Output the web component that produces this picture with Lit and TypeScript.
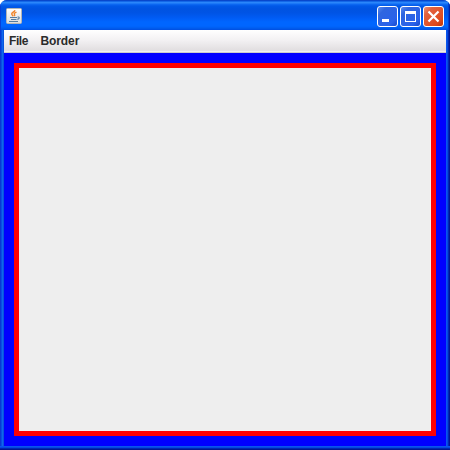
import { LitElement, html, svg, css } from "lit";
import { customElement } from "lit/decorators.js";

@customElement("app-root")
export class AppRoot extends LitElement {
  static styles = css`
    :host { display: block; width: 450px; height: 450px; background: #fff; }
    .window {
      box-sizing: border-box; width: 450px; height: 450px; overflow: hidden;
      display: flex; flex-direction: column;
      border-radius: 7px 7px 0 0;
      background: #0050e4;
    }
    .titlebar {
      height: 30px; flex: none; box-sizing: border-box;
      display: flex; align-items: flex-start;
      padding: 6px 6px 0 6px;
      background: linear-gradient(to bottom,
        #0847cc 0 1px, #1468e8 1px 2px, #2a86fa 2px 3px, #0f6cf4 4px, #0058e8 6px,
        #0053e1 9px, #0054e5 13px, #005cf5 18px, #0066ff 22px, #0066ff 26px,
        #005ef0 28px, #004ee0 30px);
      box-shadow: inset 1px 0 #0840d9, inset -1px 0 #0020a8, inset -2px 0 #0040d0;
    }
    .spacer { flex: 1; }
    .app-icon { margin: 2px 0 0 0; }
    .buttons { display: flex; gap: 2px; }
    svg { display: block; }
    .frame { flex: 1; display: grid; grid-template-columns: 4px 1fr 4px; grid-template-rows: 1fr; min-height: 0; }
    .left { background: linear-gradient(to right, #0838d4 0 1px, #0850e0 1px 2px, #0f66ec 2px 3px, #0855dd 3px); }
    .right { background: linear-gradient(to right, #0855ee 0 1px, #0448e0 1px 2px, #0028b4 2px 3px, #001594 3px); }
    .bottom { height: 4px; flex: none; background: linear-gradient(to bottom, #0855ee 0 1px, #0448e0 1px 2px, #0028b4 2px 3px, #001594 3px); }
    .content { display: flex; flex-direction: column; min-height: 0; }
    .menubar {
      height: 23px; flex: none; box-sizing: border-box; display: flex; gap: 12px;
      padding: 0 5px; border-bottom: 1px solid #cccccc;
      background: linear-gradient(to bottom, #ffffff, #f3f1f3 10px, #e2dfe1 20px, #e4e2e4 21px, #f0eff0 21px);
      font: bold 12px/22px "Liberation Sans", Arial, sans-serif; color: #2b2b2b;
    }
    .file { letter-spacing: -0.4px; width: 19.5px; }
    .border { letter-spacing: -0.1px; }
    .panel { flex: 1; box-sizing: border-box; background: #0000ff; padding: 10px; display: flex; }
    .inner { flex: 1; box-sizing: border-box; border: 5px solid #ff0000; background: #eeeeee; }
  `;

  private button(kind: "min" | "max" | "close") {
    const fill = kind === "close" ? "url(#r)" : "url(#b)";
    const glyph = kind === "min"
      ? svg`<path d="M5 13h7v3H5z" fill="#fff"/>`
      : kind === "max"
        ? svg`<path fill="#fff" fill-rule="evenodd" d="M5 5h11v11H5zM6 8v7h9V8z"/>`
        : svg`<path d="M5.500 5.500l10 10M15.500 5.500l-10 10" stroke="#fff" stroke-width="2.200"/>`;
    return html`<svg width="21" height="21" viewBox="0 0 21 21">
      <defs>
        <linearGradient id="b" x1="0" y1="0" x2="1" y2="1">
          <stop offset="0" stop-color="#5f8ff0"/><stop offset=".25" stop-color="#2f66e0"/>
          <stop offset=".75" stop-color="#2a62ea"/><stop offset="1" stop-color="#1546c8"/>
        </linearGradient>
        <linearGradient id="r" x1="0" y1="0" x2="1" y2="1">
          <stop offset="0" stop-color="#ee9a80"/><stop offset=".25" stop-color="#e2613f"/>
          <stop offset=".75" stop-color="#e04a1c"/><stop offset="1" stop-color="#b93408"/>
        </linearGradient>
      </defs>
      <rect x=".5" y=".5" width="20" height="20" rx="2.500" fill=${fill} stroke="#fff"/>
      ${glyph}
    </svg>`;
  }

  render() {
    return html`
      <div class="window">
        <div class="titlebar">
          <svg class="app-icon" width="16" height="16" viewBox="0 0 16 16">
            <defs><linearGradient id="j" x1="0" y1="0" x2="0" y2="1">
              <stop offset="0" stop-color="#fff"/><stop offset="1" stop-color="#dadcde"/>
            </linearGradient></defs>
            <rect x=".5" y=".5" width="15" height="15" rx="1" fill="url(#j)" stroke="#b4b5b4"/>
            <path d="M9 2.200C8.500 4 5.500 4.500 5.700 6c.1.900 1.200 1.300 1.500 2.200M10.500 4.200C8.500 5 7.700 5.700 8.500 6.500c.5.500.3 1-.2 1.700" fill="none" stroke="#f0852b" stroke-width="1.400"/>
            <path d="M4 9.500h7M5 11.500h5.500M3 13.500h9M11.500 9h1c1.200.4.900 2.200-1.300 2.300" fill="none" stroke="#557c9f" stroke-width="1.100"/>
          </svg>
          <div class="spacer"></div>
          <div class="buttons">${this.button("min")}${this.button("max")}${this.button("close")}</div>
        </div>
        <div class="frame">
          <div class="left"></div>
          <div class="content">
            <div class="menubar"><span class="file">File</span><span class="border">Border</span></div>
            <div class="panel"><div class="inner"></div></div>
          </div>
          <div class="right"></div>
        </div>
        <div class="bottom"></div>
      </div>`;
  }
}
